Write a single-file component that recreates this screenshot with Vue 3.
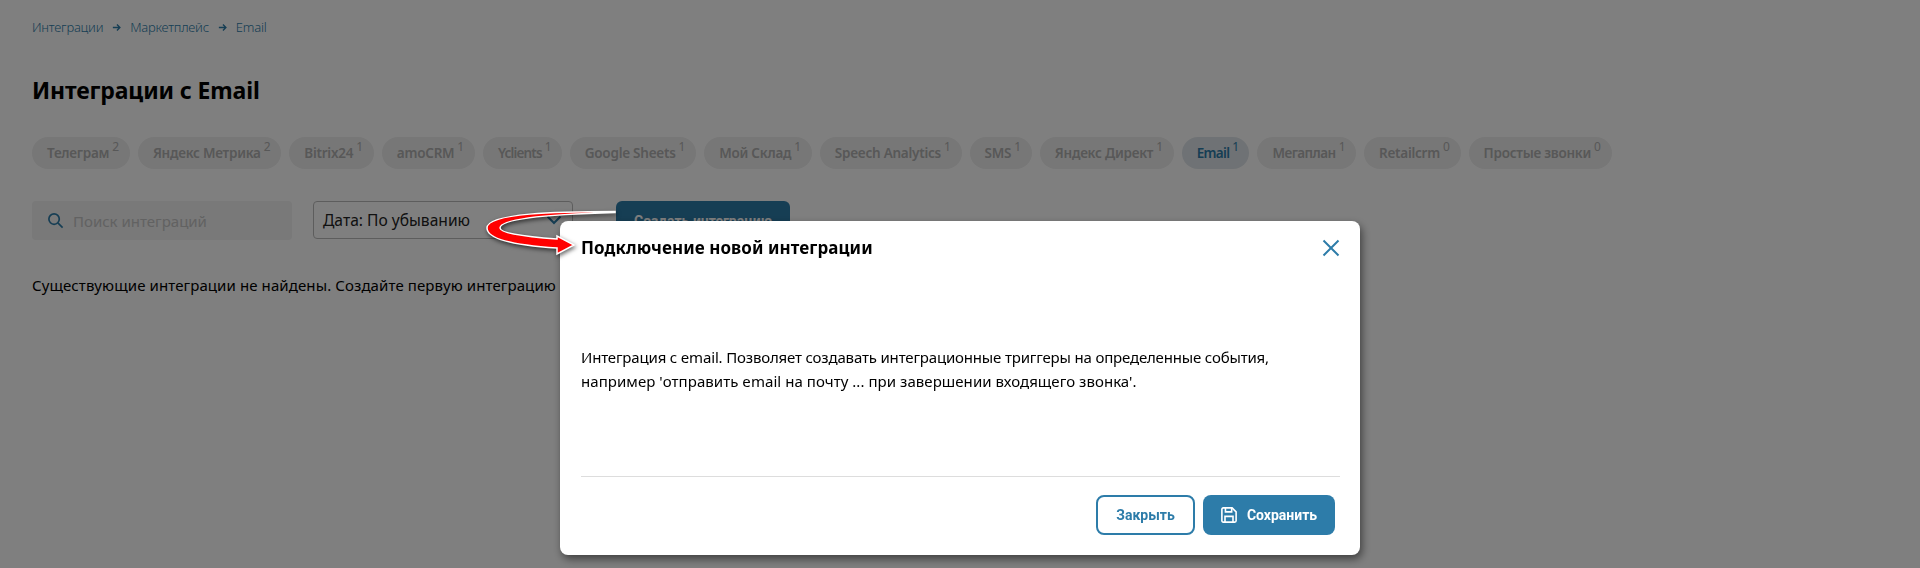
<template>
  <div class="page">
    <nav class="crumbs">
      <a>Интеграции</a>
      <svg class="crumb-arrow" viewBox="0 0 12 12"><path d="M2 6h7.500M6.500 2.800 9.700 6 6.500 9.200" /></svg>
      <a>Маркетплейс</a>
      <svg class="crumb-arrow" viewBox="0 0 12 12"><path d="M2 6h7.500M6.500 2.800 9.700 6 6.500 9.200" /></svg>
      <a>Email</a>
    </nav>

    <h1 class="title">Интеграции с Email</h1>

    <div class="chips">
      <div
        v-for="c in chips"
        :key="c.name"
        class="chip"
        :class="{ active: c.name === 'Email' }"
        :style="c.spacing ? { letterSpacing: c.spacing } : null"
      >
        {{ c.name }}<sup>{{ c.count }}</sup>
      </div>
    </div>

    <div class="toolbar">
      <div class="search">
        <svg class="search-icon" viewBox="0 0 18 18"><circle cx="7.500" cy="7.500" r="5.500" /><path d="M11.500 11.500 16.500 16.500" /></svg>
        <span>Поиск интеграций</span>
      </div>
      <div class="select">
        <span>Дата: По убыванию</span>
        <svg class="select-arrow" viewBox="0 0 16 10"><path d="M1.500 1.500 8 8l6.500-6.500" /></svg>
      </div>
      <button class="create">Создать интеграцию</button>
    </div>

    <p class="empty">Существующие интеграции не найдены. Создайте первую интеграцию</p>

    <div class="overlay">
      <div class="modal">
        <header class="modal-head">
          <h2>Подключение новой интеграции</h2>
          <svg class="close" viewBox="0 0 18 18"><path d="M1.500 1.500 16.500 16.500M16.500 1.500 1.500 16.500" /></svg>
        </header>
        <div class="modal-body">
          <div>Интеграция с email. Позволяет создавать интеграционные триггеры на определенные события,</div>
          <div class="line-two">например 'отправить email на почту ... при завершении входящего звонка'.</div>
        </div>
        <footer class="modal-foot">
          <button class="btn outline">Закрыть</button>
          <button class="btn solid">
            <svg viewBox="0 0 18 18"><path d="M2.500 1h10L17 5.500v10a1.500 1.500 0 0 1-1.500 1.500h-13A1.500 1.500 0 0 1 1 15.500v-13A1.500 1.500 0 0 1 2.500 1Z" /><path d="M5 1v4.500h7V1M4.500 17v-6.500h9V17" /></svg>
            Сохранить
          </button>
        </footer>
      </div>
    </div>

    <!-- red callout arrow drawn over the screenshot -->
    <svg class="callout" viewBox="0 0 140 50">
      <path class="callout-shape" d="M135 4.500C78 4.500 7 6 7 21C7 34 46 39 77 41L77 47L94 38L77 29L77 32C50 30 20 27 20 21C20 11 78 7 135 5.500Z" />
    </svg>
  </div>
</template>

<script setup>
const chips = [
  { name: 'Телеграм', count: 2 },
  { name: 'Яндекс Метрика', count: 2 },
  { name: 'Bitrix24', count: 1 },
  { name: 'amoCRM', count: 1 },
  { name: 'Yclients', count: 1, spacing: '-0.85px' },
  { name: 'Google Sheets', count: 1 },
  { name: 'Мой Склад', count: 1 },
  { name: 'Speech Analytics', count: 1 },
  { name: 'SMS', count: 1 },
  { name: 'Яндекс Директ', count: 1 },
  { name: 'Email', count: 1, spacing: '-0.7px' },
  { name: 'Мегаплан', count: 1, spacing: '-0.55px' },
  { name: 'Retailcrm', count: 0 },
  { name: 'Простые звонки', count: 0 }
]
</script>

<style>
html, body {
  margin: 0;
  background: #fff;
}
</style>

<style scoped>
.page {
  height: 568px;
  padding: 18px 32px 0;
  box-sizing: border-box;
  overflow: hidden;
  font-family: "Noto Sans", "Open Sans", sans-serif;
  color: #000;
}

.crumbs {
  display: flex;
  align-items: center;
  gap: 8px;
  height: 18px;
  font-size: 13px;
  font-weight: 300;
  letter-spacing: -0.22px;
  color: #2d7ca9;
}
.crumb-arrow {
  width: 11px;
  height: 11px;
  fill: none;
  stroke: #2d7ca9;
  stroke-width: 1.5;
}

.title {
  margin: 39px 0 0;
  font-size: 23px;
  letter-spacing: -0.14px;
  line-height: 30px;
  font-weight: 700;
}

.chips {
  display: flex;
  gap: 8px;
  margin-top: 32px;
}
.chip {
  height: 32px;
  padding: 0 11px 0 15px;
  border-radius: 16px;
  background: #eee;
  color: #b0b0b0;
  font-size: 13.5px;
  font-weight: 600;
  letter-spacing: -0.25px;
  line-height: 33px;
  white-space: nowrap;
}
.chip sup {
  font-size: 12px;
  font-weight: 400;
  line-height: 0;
  margin-left: 3px;
  vertical-align: 7px;
}
.chip.active {
  background: #dfe5ea;
  color: #2d7ca9;
}

.toolbar {
  display: flex;
  gap: 21px;
  margin-top: 32px;
}
.search {
  display: flex;
  align-items: center;
  gap: 9px;
  width: 260px;
  height: 39px;
  padding-left: 15px;
  box-sizing: border-box;
  border-radius: 4px;
  background: #f2f2f2;
  color: #c4c4c4;
  font-size: 15px;
}
.search-icon {
  width: 17px;
  height: 17px;
  fill: none;
  stroke: #2d7ca9;
  stroke-width: 1.8;
}
.select {
  display: flex;
  align-items: center;
  justify-content: space-between;
  width: 260px;
  height: 38px;
  padding: 0 10px 0 9px;
  box-sizing: border-box;
  border: 1px solid #bbb;
  border-radius: 4px;
  font-size: 15.6px;
  color: #222;
}
.select-arrow {
  width: 16px;
  height: 10px;
  fill: none;
  stroke: #2d7ca9;
  stroke-width: 2;
}
.create {
  width: 174px;
  height: 40px;
  margin-left: 22px;
  border: 0;
  border-radius: 6px;
  background: #2d7ca9;
  color: #fff;
  font-family: Roboto, sans-serif;
  font-size: 14px;
  font-weight: 700;
}

.empty {
  margin: 34px 0 0;
  font-size: 15px;
  letter-spacing: 0.1px;
  line-height: 20px;
}

.overlay {
  position: fixed;
  inset: 0;
  display: flex;
  justify-content: center;
  align-items: flex-start;
  background: rgba(0, 0, 0, 0.5);
}
.modal {
  display: flex;
  flex-direction: column;
  width: 800px;
  height: 334px;
  margin-top: 221px;
  padding: 0 20px 20px 21px;
  box-sizing: border-box;
  border-radius: 8px;
  background: #fff;
  box-shadow: 2px 4px 8px rgba(0, 0, 0, 0.5);
}
.modal-head {
  display: flex;
  align-items: center;
  justify-content: space-between;
  height: 53px;
}
.modal-head h2 {
  margin: 0;
  font-size: 17px;
  letter-spacing: 0.08px;
  font-weight: 700;
}
.close {
  width: 18px;
  height: 18px;
  fill: none;
  stroke: #2d7ca9;
  stroke-width: 2;
}
.modal-body {
  flex: 1;
  padding-top: 71px;
  font-size: 15px;
  letter-spacing: -0.17px;
  line-height: 24px;
}
.line-two {
  letter-spacing: 0.05px;
}
.modal-foot {
  display: flex;
  justify-content: flex-end;
  gap: 8px;
  padding: 18px 5px 0 0;
  border-top: 1px solid #ddd;
}
.btn {
  display: flex;
  align-items: center;
  justify-content: center;
  gap: 10px;
  height: 40px;
  box-sizing: border-box;
  border-radius: 8px;
  font-family: Roboto, sans-serif;
  font-size: 14px;
  font-weight: 700;
}
.btn.outline {
  width: 99px;
  border: 2px solid #2d7ca9;
  background: #fff;
  color: #2d7ca9;
}
.btn.solid {
  width: 132px;
  border: 0;
  background: #2d7ca9;
  color: #fff;
}
.btn svg {
  width: 16px;
  height: 16px;
  fill: none;
  stroke: #fff;
  stroke-width: 1.8;
}

.callout {
  position: absolute;
  left: 480px;
  top: 207px;
  width: 140px;
  height: 50px;
  filter: drop-shadow(1px 2px 2px rgba(0, 0, 0, 0.6));
}
.callout-shape {
  fill: #f00;
  stroke: #fff;
  stroke-width: 1.5;
}
</style>
